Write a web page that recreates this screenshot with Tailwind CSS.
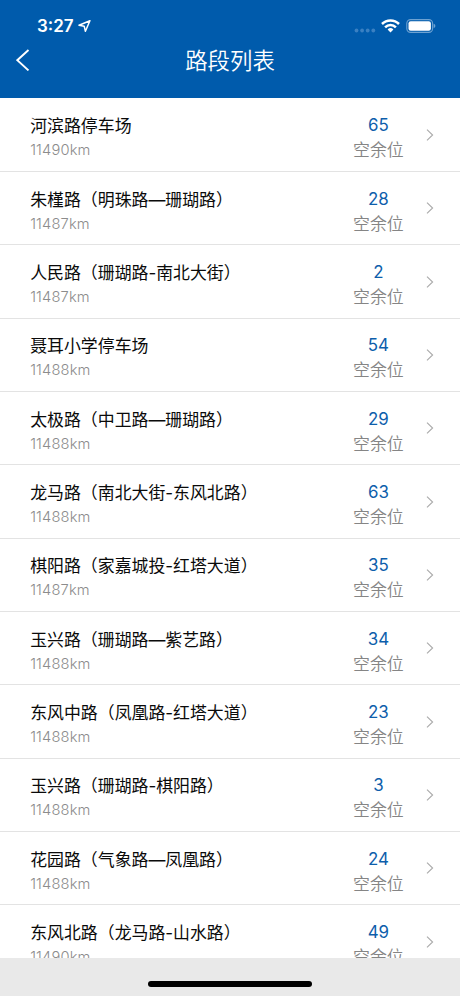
<!DOCTYPE html>
<html lang="zh-CN">
<head>
    <meta charset="UTF-8">
    <meta name="viewport" content="width=device-width, initial-scale=1.0">
    <title>路段列表</title>
    <script src="https://cdn.jsdelivr.net/npm/@tailwindcss/browser@4"></script>
</head>
<body class="bg-white font-['Inter','Noto_Sans_CJK_SC',sans-serif]">

    <div class="w-[460px] h-[996px] flex flex-col overflow-hidden">
        <!-- Header -->
        <header class="h-[98px] shrink-0 bg-[#005bac] text-white">
            <!-- Status bar -->
            <div class="h-[42px] pt-[10px] pl-[37px] pr-6 flex items-center justify-between">
                <div class="flex items-center gap-1">
                    <span class="text-[17px] leading-5 font-semibold">3:27</span>
                    <svg class="w-[13px] h-3" viewBox="0 0 13 12" fill="none" stroke="currentColor" stroke-width="1.5" stroke-linejoin="round">
                        <path d="M11.9 0.8 L1 5.2 L6.2 6.2 L7.4 11.3 Z" />
                    </svg>
                </div>
                <div class="flex items-center">
                    <svg class="w-[22px] h-[5px] mt-[8px] mr-[5px]" viewBox="0 0 22 5" fill="#3a80c2">
                        <circle cx="2.5" cy="2.5" r="1.9" />
                        <circle cx="8.1" cy="2.5" r="1.9" />
                        <circle cx="13.7" cy="2.5" r="1.9" />
                        <circle cx="19.3" cy="2.5" r="1.9" />
                    </svg>
                    <svg class="w-[19px] h-[14px] mr-[6px]" viewBox="0 0 19 14" fill="none" stroke="currentColor" stroke-width="2.5">
                        <path d="M1 5 A12 12 0 0 1 18 5" />
                        <path d="M4.1 8.3 A7.6 7.6 0 0 1 14.9 8.3" />
                        <path d="M9.5 13.4 L6.6 10.5 A4.1 4.1 0 0 1 12.4 10.5 Z" fill="currentColor" stroke="none" />
                    </svg>
                    <svg class="w-[30px] h-[14px]" viewBox="0 0 30 14" fill="none">
                        <rect x="0.8" y="0.6" width="25.8" height="12.8" rx="3.8" stroke="#6da2d2" stroke-width="1.1" />
                        <rect x="2.5" y="2.2" width="22.4" height="9.6" rx="2.2" fill="#fff" />
                        <path d="M27.6 4.8 Q29.4 5.4 29.4 7 Q29.4 8.6 27.6 9.2 Z" fill="#6da2d2" />
                    </svg>
                </div>
            </div>
            <!-- Navigation bar -->
            <div class="h-9 px-4 grid grid-cols-[1fr_auto_1fr] items-center">
                <svg class="w-[14px] h-[22px]" viewBox="0 0 14 22" fill="none" stroke="currentColor" stroke-width="1.9">
                    <path d="M12.5 1 L1.3 11.2 L12.5 21.4" />
                </svg>
                <h1 class="text-[22.4px] leading-8 pt-[2px] font-[350]">路段列表</h1>
            </div>
        </header>

        <!-- Road list -->
        <main id="road-list" class="flex-1 min-h-0 overflow-hidden bg-white pt-[0.6px]"></main>

        <!-- Home indicator -->
        <footer class="h-[38px] shrink-0 bg-[#e9e9e9] flex justify-center pt-[23px]">
            <div class="w-[164px] h-[6px] rounded-full bg-black"></div>
        </footer>
    </div>

    <script>
        const roads = [
            { name: '河滨路停车场', distance: '11490km', free: 65 },
            { name: '朱槿路（明珠路—珊瑚路）', distance: '11487km', free: 28 },
            { name: '人民路（珊瑚路-南北大街）', distance: '11487km', free: 2 },
            { name: '聂耳小学停车场', distance: '11488km', free: 54 },
            { name: '太极路（中卫路—珊瑚路）', distance: '11488km', free: 29 },
            { name: '龙马路（南北大街-东风北路）', distance: '11488km', free: 63 },
            { name: '棋阳路（家嘉城投-红塔大道）', distance: '11487km', free: 35 },
            { name: '玉兴路（珊瑚路—紫艺路）', distance: '11488km', free: 34 },
            { name: '东风中路（凤凰路-红塔大道）', distance: '11488km', free: 23 },
            { name: '玉兴路（珊瑚路-棋阳路）', distance: '11488km', free: 3 },
            { name: '花园路（气象路—凤凰路）', distance: '11488km', free: 24 },
            { name: '东风北路（龙马路-山水路）', distance: '11490km', free: 49 },
        ];

        document.getElementById('road-list').innerHTML = roads.map(road => `
            <div class="h-[73.33px] flex border-b border-[#e3e3e3] pl-[30.2px] pr-[26px]">
                <div class="flex-1 pt-[15.9px]">
                    <div class="text-[16.9px] leading-6 text-[#0a0a0a] whitespace-nowrap">${road.name}</div>
                    <div class="text-[14.7px] leading-6 tracking-[0.15px] font-[350] text-[#8c8c8c]">${road.distance}</div>
                </div>
                <div class="w-[60px] pt-[14.9px] text-center">
                    <div class="text-[16.9px] leading-6 text-[#0d5eab]">${road.free}</div>
                    <div class="text-[16.9px] leading-[26px] font-[350] text-[#858585]">空余位</div>
                </div>
                <svg class="w-2 h-3 mt-[30.4px] ml-[17.6px]" viewBox="0 0 8 12" fill="none" stroke="#aaa" stroke-width="1.1">
                    <path d="M1 0.6 L6.6 6 L1 11.4" />
                </svg>
            </div>
        `).join('');
    </script>

</body>
</html>
